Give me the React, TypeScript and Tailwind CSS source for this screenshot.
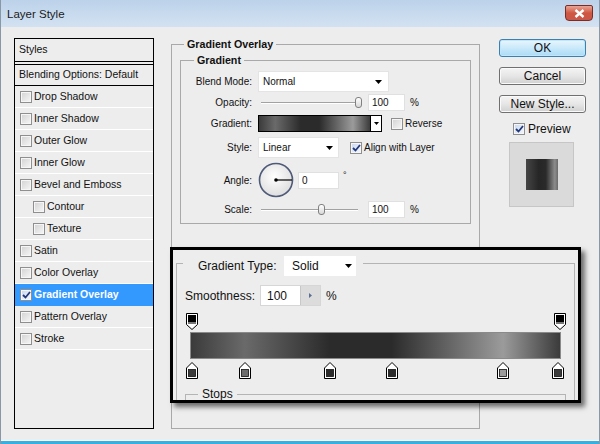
import React from "react"

const gradientBg =
  "bg-[linear-gradient(90deg,#3b3b3b_0%,#6a6a6a_14.6%,#2b2b2b_37.6%,#2b2b2b_54.3%,#9b9b9b_84.6%,#3b3b3b_100%)]"

const styleItems = [
  { label: "Drop Shadow" },
  { label: "Inner Shadow" },
  { label: "Outer Glow" },
  { label: "Inner Glow" },
  { label: "Bevel and Emboss" },
  { label: "Contour", indent: true },
  { label: "Texture", indent: true },
  { label: "Satin" },
  { label: "Color Overlay" },
  { label: "Gradient Overlay", checked: true, active: true },
  { label: "Pattern Overlay" },
  { label: "Stroke" },
]

const colorStops = [
  { left: "left-[9px]", color: "#3c3c3c" },
  { left: "left-[62px]", color: "#6e6e6e" },
  { left: "left-[147px]", color: "#2b2b2b" },
  { left: "left-[209px]", color: "#2c2c2c" },
  { left: "left-[320px]", color: "#9b9b9b" },
  { left: "left-[375px]", color: "#3c3c3c" },
]

function Check({ checked = false }: { checked?: boolean }) {
  return (
    <span
      className={`inline-flex h-[12px] w-[12px] shrink-0 items-center justify-center border border-[#8f8f8f] shadow-[inset_0_0_0_1px_#f6f6f6] ${
        checked ? "bg-gradient-to-br from-[#c9d8ef] to-[#f4f8fd]" : "bg-gradient-to-br from-[#d2d2d2] to-[#f7f7f7]"
      }`}
    >
      {checked && (
        <svg width="9" height="8" viewBox="0 0 9 8">
          <path d="M1 4 L3.5 6.5 L8 1" fill="none" stroke="#22387a" strokeWidth="1.8" />
        </svg>
      )}
    </span>
  )
}

function Arrow() {
  return (
    <svg width="7" height="4" viewBox="0 0 7 4">
      <path d="M0 0H7L3.5 4Z" fill="#000" />
    </svg>
  )
}

function Field({ value, w }: { value: string; w: string }) {
  return (
    <div className={`flex h-[17px] items-center border border-[#e0e0e0] bg-white pl-[3px] ${w}`}>{value}</div>
  )
}

function Slider({ thumb, track }: { thumb: string; track: string }) {
  return (
    <div className="relative ml-[3px] h-[17px] w-[102px]">
      <div className={`absolute left-0 top-[8px] h-[2px] border-t border-[#a2a2a2] bg-white ${track}`} />
      <div
        className={`absolute top-[3px] h-[11px] w-[7px] rounded-[3px] border border-[#808080] bg-gradient-to-b from-white to-[#d8d8d8] ${thumb}`}
      />
    </div>
  )
}

function Row({ label, h, children }: { label: string; h: string; children: React.ReactNode }) {
  return (
    <div className={`flex items-center ${h}`}>
      <span className="w-[71px] text-right">{label}</span>
      <div className="ml-[6px] flex items-center">{children}</div>
    </div>
  )
}

function Button({ label, primary = false }: { label: string; primary?: boolean }) {
  return (
    <div
      className={`flex h-[18px] w-[87px] items-center justify-center rounded-[3px] border text-[12px] leading-none ${
        primary
          ? "border-[#3c7fb1] bg-gradient-to-b from-[#eaf6fd] via-[#c9e9fa] to-[#a9dbf6] shadow-[inset_0_0_0_1px_#bfe6fb]"
          : "border-[#707070] bg-gradient-to-b from-[#f4f4f4] via-[#e6e6e6] to-[#d0d0d0] shadow-[inset_0_0_0_1px_#fafafa]"
      }`}
    >
      {label}
    </div>
  )
}

function TopStop() {
  return (
    <svg width="12" height="17" viewBox="0 0 12 17">
      <path d="M0.5 0.5H11.5V11.5L6 16.5L0.5 11.5Z" fill="#fff" stroke="#000" />
      <rect x="2" y="2" width="8" height="7" fill="#000" />
      <rect x="2" y="9" width="8" height="2" fill="#777" />
    </svg>
  )
}

function BottomStop({ color }: { color: string }) {
  return (
    <svg width="12" height="17" viewBox="0 0 12 17">
      <path d="M6 0.5L11.5 6V16.5H0.5V6Z" fill="#fff" stroke="#000" />
      <rect x="2.5" y="7.5" width="7" height="7" fill={color} stroke="#111" strokeWidth="0.8" />
    </svg>
  )
}

export default function App() {
  return (
    <div className="relative flex h-[444px] w-[600px] flex-col overflow-hidden border-x border-[#8a97a6] bg-[#ededed] font-['Liberation_Sans',Arial,sans-serif] text-[#111]">
      {/* title bar */}
      <div className="flex h-[27px] shrink-0 items-start justify-between bg-gradient-to-b from-[#bcd2ea] to-[#d3e2f2]">
        <span className="mt-[6px] pl-[6px] text-[11.5px] text-[#1b1b1b]">Layer Style</span>
        <div className="mr-[6px] mt-[5px] flex h-[16px] w-[28px] items-center justify-center rounded-b-[4px] rounded-t-[2px] border border-[#7e2c22] bg-gradient-to-b from-[#e8a596] via-[#cf5642] to-[#c9574a]">
          <svg width="11" height="9" viewBox="0 0 11 9">
            <path d="M1.5 1L9.5 8M9.5 1L1.5 8" stroke="#fff" strokeWidth="2.4" />
          </svg>
        </div>
      </div>

      {/* body */}
      <div className="flex flex-1 items-start pl-[13px] pt-[11px]">
        {/* styles list */}
        <div className="h-[391px] w-[140px] shrink-0 border border-black text-[10.5px]">
          <div className="flex h-[23px] items-center border-b border-black pl-[4px]">Styles</div>
          <div className="mt-[2px] flex h-[22px] items-center border-y border-black pl-[4px]">Blending Options: Default</div>
          {styleItems.map((it) => (
            <div
              key={it.label}
              className={`flex h-[22px] items-center gap-[2px] border-b ${
                it.active ? "border-[#3399ff] bg-[#3399ff] font-bold text-white" : "border-white"
              } ${it.indent ? "pl-[18px]" : "pl-[5px]"}`}
            >
              <Check checked={it.checked} />
              <span>{it.label}</span>
            </div>
          ))}
        </div>

        {/* gradient overlay group */}
        <fieldset className="ml-[17px] h-[391px] w-[309px] shrink-0 border border-[#a9a9a9] text-[10px]">
          <legend className="ml-[12px] px-[3px] text-[10.7px] font-bold leading-[13px]">Gradient Overlay</legend>
          <fieldset className="ml-[8px] mt-[3px] w-[291px] border border-[#a9a9a9] pb-[5px]">
            <legend className="ml-[13px] px-[3px] text-[10.7px] font-bold leading-[13px]">Gradient</legend>
            <div className="flex flex-col pt-[4px]">
              <Row label="Blend Mode:" h="h-[21px]">
                <div className="flex h-[21px] w-[131px] items-center justify-between border border-[#e4e4e4] bg-white pl-[4px] pr-[6px]">
                  <span>Normal</span>
                  <Arrow />
                </div>
              </Row>
              <div className="mt-[2px]">
                <Row label="Opacity:" h="h-[17px]">
                  <Slider track="w-[96px]" thumb="left-[94px]" />
                  <div className="ml-[5px]">
                    <Field value="100" w="w-[37px]" />
                  </div>
                  <span className="ml-[5px]">%</span>
                </Row>
              </div>
              <div className="mt-[4px]">
                <Row label="Gradient:" h="h-[17px]">
                  <div className="flex h-[17px] w-[124px] border border-black">
                    <div className={`flex-1 ${gradientBg}`} />
                    <div className="flex w-[11px] items-center justify-center border-l border-black bg-white">
                      <svg width="5" height="3" viewBox="0 0 5 3">
                        <path d="M0 0H5L2.5 3Z" fill="#000" />
                      </svg>
                    </div>
                  </div>
                  <div className="ml-[9px] flex items-center gap-[2px]">
                    <Check />
                    <span>Reverse</span>
                  </div>
                </Row>
              </div>
              <div className="mt-[5px]">
                <Row label="Style:" h="h-[21px]">
                  <div className="flex h-[21px] w-[81px] items-center justify-between border border-[#e4e4e4] bg-white pl-[4px] pr-[5px]">
                    <span>Linear</span>
                    <Arrow />
                  </div>
                  <div className="ml-[11px] flex items-center gap-[2px]">
                    <Check checked />
                    <span>Align with Layer</span>
                  </div>
                </Row>
              </div>
              <div className="mt-[5px]">
                <Row label="Angle:" h="h-[34px]">
                  <svg width="36" height="36" viewBox="0 0 36 36">
                    <defs>
                      <radialGradient id="dial" cx="0.45" cy="0.4" r="0.6">
                        <stop offset="0" stopColor="#ffffff" />
                        <stop offset="1" stopColor="#dedede" />
                      </radialGradient>
                    </defs>
                    <circle cx="18" cy="18" r="16.5" fill="url(#dial)" stroke="#4f5a78" strokeWidth="1.6" />
                    <line x1="18" y1="18" x2="34" y2="18" stroke="#000" strokeWidth="1.2" />
                    <circle cx="18" cy="18" r="1.8" fill="#000" />
                  </svg>
                  <div className="ml-[4px]">
                    <Field value="0" w="w-[41px]" />
                  </div>
                  <span className="mb-[10px] ml-[4px] text-[9px] leading-none">°</span>
                </Row>
              </div>
              <div className="mt-[4px]">
                <Row label="Scale:" h="h-[17px]">
                  <Slider track="w-[97px]" thumb="left-[57px]" />
                  <div className="ml-[5px]">
                    <Field value="100" w="w-[37px]" />
                  </div>
                  <span className="ml-[5px]">%</span>
                </Row>
              </div>
            </div>
          </fieldset>
        </fieldset>

        {/* buttons */}
        <div className="ml-[19px] mt-[1px] flex w-[87px] shrink-0 flex-col">
          <Button label="OK" primary />
          <div className="mt-[10px]">
            <Button label="Cancel" />
          </div>
          <div className="mt-[10px]">
            <Button label="New Style..." />
          </div>
          <div className="ml-[14px] mt-[9px] flex h-[13px] items-center gap-[3px] text-[12px]">
            <Check checked />
            <span>Preview</span>
          </div>
          <div className="ml-[10px] mt-[7px] flex h-[65px] w-[65px] items-center justify-center border border-[#c6c6c6] bg-[#dadada]">
            <div className="h-[31px] w-[32px] bg-[linear-gradient(90deg,#454545_0%,#262626_40%,#2a2a2a_62%,#8c8c8c_90%,#6a6a6a_100%)]" />
          </div>
        </div>
      </div>

      <div className="h-[4px] shrink-0 border-t border-white bg-[#34b1e0]" />

      {/* highlighted gradient editor callout */}
      <div className="absolute left-[169px] top-[247px] h-[156px] w-[411px] overflow-hidden border-[3px] border-black bg-[#ededed] text-[12px] shadow-[4px_4px_5px_rgba(0,0,0,0.55)]">
        <fieldset className="mx-[3px] h-[200px] border border-[#b4b4b4]">
          <legend className="ml-[6px] px-[7px] pt-[6px]">
            <div className="flex items-center whitespace-nowrap">
              <span className="w-[94px] shrink-0 pl-[8px]">Gradient Type:</span>
              <div className="flex h-[20px] w-[72px] shrink-0 items-center justify-between bg-white pl-[8px] pr-[4px]">
                <span>Solid</span>
                <Arrow />
              </div>
            </div>
          </legend>
          <div className="mt-[9px] flex h-[21px] items-center pl-[8px]">
            <span className="w-[75px] whitespace-nowrap">Smoothness:</span>
            <div className="flex h-[21px] w-[61px] items-center border border-[#d6d6d6] bg-white">
              <span className="flex-1 pl-[6px]">100</span>
              <div className="flex h-full w-[20px] items-center justify-center border-l border-[#c8c8c8] bg-[#dcdcdc]">
                <svg width="3" height="5" viewBox="0 0 3 5">
                  <path d="M0 0L3 2.5L0 5Z" fill="#5b6f96" />
                </svg>
              </div>
            </div>
            <span className="ml-[5px]">%</span>
          </div>
          <div className="mt-[7px] flex justify-between pl-[9px] pr-[8px]">
            <TopStop />
            <TopStop />
          </div>
          <div className={`ml-[13px] mt-[2px] h-[27px] w-[371px] border border-[#8a8a8a] ${gradientBg}`} />
          <div className="relative mt-[3px] h-[17px]">
            {colorStops.map((s) => (
              <div key={s.left} className={`absolute top-0 ${s.left}`}>
                <BottomStop color={s.color} />
              </div>
            ))}
          </div>
          <fieldset className="mx-[8px] mt-[8px] h-[40px] border border-[#b4b4b4]">
            <legend className="ml-[12px] px-[4px] leading-[14px]">Stops</legend>
          </fieldset>
        </fieldset>
      </div>
    </div>
  )
}
